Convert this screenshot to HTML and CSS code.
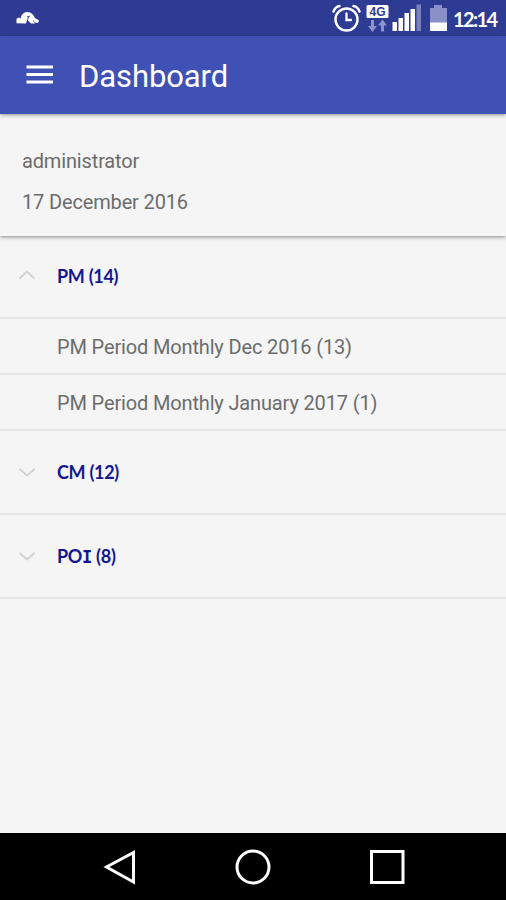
FILE: index.html
```html
<!DOCTYPE html>
<html lang="en">
  <head>
    <meta charset="UTF-8" />
    <meta name="viewport" content="width=device-width, initial-scale=1.0" />
    <title>Dashboard</title>
    <link rel="stylesheet" href="styles.css">
  </head>
  <body>
    <div class="status-bar">
      <svg class="app-icon" width="24" height="14" viewBox="0 0 24 14">
        <path fill="#fff" d="M0.500 7.800 L3 6.500 L5 7.500 C4.500 4 8 0.800 11.500 1 C15.500 1.200 17.500 4 19 7 C20.500 8 22 8.300 23 9.500 L22 12 L19 11.500 L16.500 8.500 C17 10.500 18.500 11 19 12.500 L15 12.500 L11.500 9 L10 12.500 L0.500 12.200 Z" />
        <path fill="none" stroke="#2d3a8e" stroke-width="0.900" d="M10.500 12.500 L12.500 6 M11 6 L14 5" />
      </svg>
      <div class="status-icons">
        <svg class="alarm" width="30" height="30" viewBox="0 0 30 30">
          <g fill="none" stroke="#fff" stroke-linecap="round">
            <circle cx="14.500" cy="16.500" r="11" stroke-width="2.400" />
            <path stroke-width="2.300" d="M14.500 10.500 V17 H19" />
            <path stroke-width="2.400" d="M1.500 8.500 Q3 4 7.500 3 M21.500 3 Q26 4 27.500 8.500" />
          </g>
        </svg>
        <svg class="network" width="23" height="29" viewBox="0 0 23 29">
          <rect x="0.500" y="1" width="22" height="13" rx="1.500" fill="#fff" />
          <text class="network-label" x="11.500" y="12" text-anchor="middle">4G</text>
          <path fill="#8c94cb" d="M5 16 h3 v6 h3 l-4.500 6 l-4.500 -6 h3 Z M15 27.500 h3 v-6 h3 l-4.500 -6 l-4.500 6 h3 Z" />
        </svg>
        <svg class="signal" width="30" height="28" viewBox="0 0 30 28">
          <g fill="#fff">
            <rect x="0.500" y="18" width="4.500" height="9" />
            <rect x="6.500" y="14" width="4.500" height="13" />
            <rect x="12.500" y="9" width="4.500" height="18" />
            <rect x="18.500" y="5" width="4.500" height="22" />
          </g>
          <rect x="24.500" y="0.500" width="4.500" height="26.500" fill="#7880bd" />
        </svg>
        <svg class="battery" width="19" height="28" viewBox="0 0 19 28">
          <path fill="#8990c8" d="M5 1 h8 v3 h5 v23 h-17 v-23 h4 Z" />
          <rect x="1" y="18.500" width="17" height="8.500" fill="#fff" />
        </svg>
        <span class="time">12:14</span>
      </div>
    </div>

    <header class="toolbar">
      <svg class="menu-icon" width="28" height="20" viewBox="0 0 28 20">
        <path stroke="#fff" stroke-width="3" d="M0.500 2 H27 M0.500 9.500 H27 M0.500 17 H27" />
      </svg>
      <h1>Dashboard</h1>
    </header>

    <section class="user-info">
      <p>administrator</p>
      <p>17 December 2016</p>
    </section>

    <ul class="groups">
      <li class="group">
        <svg class="chevron" width="18" height="10" viewBox="0 0 18 10"><path d="M1.500 8.500 L9 1.500 L16.500 8.500" /></svg>
        <span class="group-name">PM (14)</span>
      </li>
      <li class="item">PM Period Monthly Dec 2016 (13)</li>
      <li class="item">PM Period Monthly January 2017 (1)</li>
      <li class="group">
        <svg class="chevron" width="18" height="10" viewBox="0 0 18 10"><path d="M1.500 2 L9 8.500 L16.500 2" /></svg>
        <span class="group-name">CM (12)</span>
      </li>
      <li class="group">
        <svg class="chevron" width="18" height="10" viewBox="0 0 18 10"><path d="M1.500 2 L9 8.500 L16.500 2" /></svg>
        <span class="group-name">PO<span class="serif-i">I</span> (8)</span>
      </li>
    </ul>

    <nav class="nav-bar">
      <svg width="36" height="36" viewBox="0 0 36 36"><path d="M32.500 3.500 V33 L5.500 18 Z" /></svg>
      <svg width="36" height="36" viewBox="0 0 36 36"><circle cx="18" cy="18" r="16" /></svg>
      <svg width="36" height="36" viewBox="0 0 36 36"><rect x="2.500" y="2.500" width="31.500" height="31" /></svg>
    </nav>
  </body>
</html>
```
FILE: styles.css
```css
* {
    box-sizing: border-box;
}

body {
    margin: 0;
    height: 100vh;
    display: flex;
    flex-direction: column;
    overflow: hidden;
    font-family: Roboto, "Liberation Sans", sans-serif;
    background-color: #f5f5f5;
    color: #6c6c6c;
}

svg {
    display: block;
    flex: none;
}

.status-bar {
    flex: none;
    display: flex;
    align-items: center;
    justify-content: space-between;
    height: 36px;
    padding: 0 9px 0 16px;
    background-color: #2d3b93;
}

.status-icons {
    display: flex;
    align-items: center;
}

.network {
    margin-left: 4px;
}

.network-label {
    font: bold 12px "Liberation Sans", sans-serif;
    fill: #2d3b93;
}

.signal {
    margin-left: 3px;
}

.battery {
    margin-left: 7px;
}

.time {
    width: 44px;
    margin: 1px 0 0 5px;
    font-family: Lato, sans-serif;
    font-size: 20px;
    font-weight: bold;
    letter-spacing: -1.6px;
    white-space: nowrap;
    color: #fff;
}

.toolbar {
    flex: none;
    display: flex;
    align-items: center;
    height: 78px;
    padding-left: 26px;
    background-color: #3f51b5;
    box-shadow: 0 1px 4px rgba(0, 0, 0, 0.4);
    z-index: 1;
}

.toolbar h1 {
    margin: 3px 0 0 25px;
    font-size: 31px;
    font-weight: normal;
    letter-spacing: -0.1px;
    color: #fff;
}

.user-info {
    flex: none;
    height: 122px;
    padding: 27px 22px 0;
    box-shadow: 0 1px 4px rgba(0, 0, 0, 0.45);
}

.user-info p {
    margin: 0;
    font-size: 20px;
    line-height: 41px;
    letter-spacing: -0.15px;
}

.groups {
    flex: 1;
    margin: 0;
    padding: 0;
    list-style: none;
}

.group, .item {
    display: flex;
    align-items: center;
    border-bottom: 2px solid #e6e6e6;
}

.group {
    height: 84px;
    padding-left: 18px;
    font-family: Lato, sans-serif;
    font-size: 18px;
    font-weight: bold;
    letter-spacing: -0.3px;
    color: #13178f;
}

.group:first-child {
    height: 83px;
}

.group:first-child .chevron {
    margin-bottom: 3px;
}

.group-name {
    margin: 0 0 1px 21px;
}

.serif-i {
    font-family: "DejaVu Sans Mono", monospace;
    font-size: 17px;
}

.chevron {
    fill: none;
    stroke: #d2d2d2;
    stroke-width: 2;
}

.item {
    height: 56px;
    padding: 2px 0 0 57px;
    font-size: 20px;
    letter-spacing: -0.15px;
}

.nav-bar {
    flex: none;
    display: flex;
    justify-content: center;
    gap: 98px;
    height: 67px;
    padding-top: 16px;
    background-color: #000;
}

.nav-bar svg {
    fill: none;
    stroke: #fff;
    stroke-width: 3;
}
```
